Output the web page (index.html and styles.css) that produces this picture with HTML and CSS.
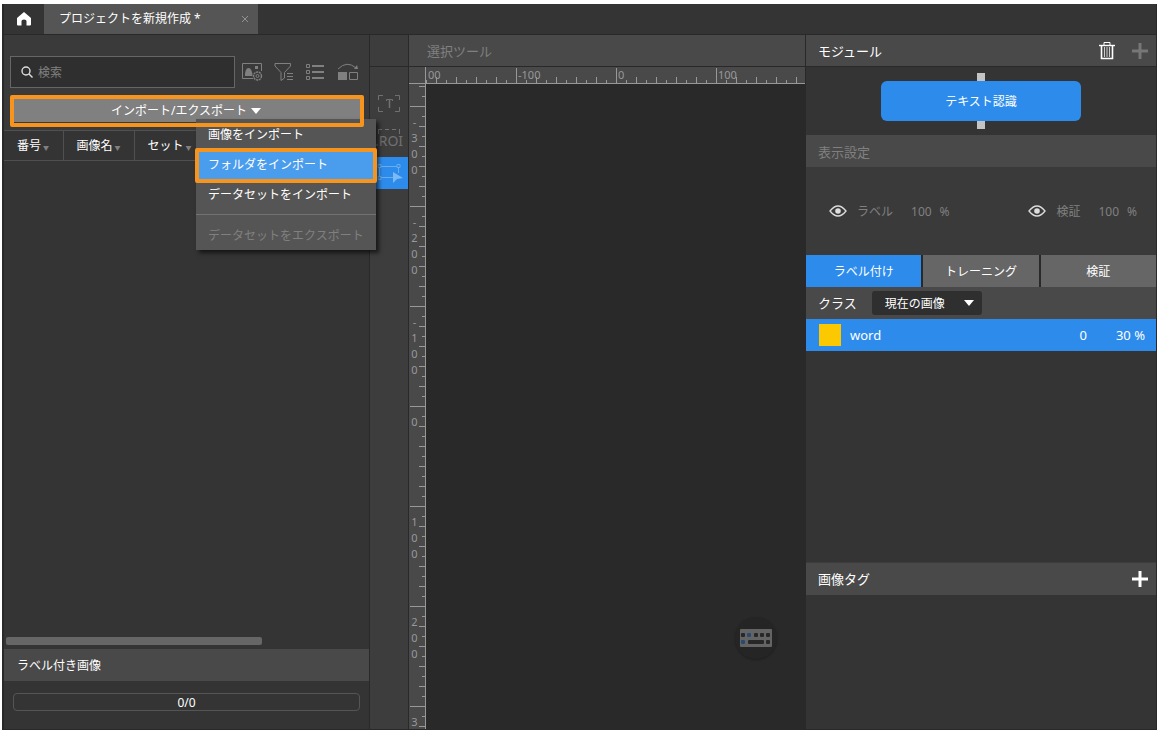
FILE: index.html
```html
<!DOCTYPE html>
<html lang="ja">
<head>
<meta charset="utf-8">
<title>プロジェクトを新規作成</title>
<link rel="stylesheet" href="styles.css">
</head>
<body>
<div class="window">
  <header class="titlebar">
    <button class="home" aria-label="ホーム">
      <svg width="16" height="16" viewBox="0 0 16 16"><path d="M8 1 L15 7 V13.5 Q15 14.500 14 14.500 H10.500 V10 Q10.500 8.500 8 8.500 Q5.500 8.500 5.500 10 V14.500 H2 Q1 14.500 1 13.500 V7 Z" fill="#fff"/></svg>
    </button>
    <div class="tab"><span>プロジェクトを新規作成 *</span><button class="close" aria-label="閉じる"><svg width="8" height="8" viewBox="0 0 8 8"><path d="M1 1 L7 7 M7 1 L1 7" stroke="#929292"/></svg></button></div>
  </header>

  <main class="workspace">
    <section class="images">
      <div class="filters">
        <label class="search">
          <svg width="13" height="13" viewBox="0 0 13 13" fill="none" stroke="#ddd" stroke-width="1.4"><circle cx="5" cy="5" r="4"/><path d="M8 8 L11.500 11.500"/></svg>
          <input type="text" placeholder="検索" aria-label="検索">
        </label>
        <div class="filter-icons">
          <button aria-label="画像表示設定"><svg width="22" height="20" viewBox="0 0 22 20" fill="none" stroke="#808080"><path d="M12 16.500 H1.500 V1.500 H20.500 V9"/><path d="M4 14 Q4 6 7.500 6 Q11 6 11.500 14 Z" fill="#808080" stroke="none"/><rect x="14" y="4" width="3" height="3" fill="#808080" stroke="none"/><circle cx="16.500" cy="14" r="4" stroke-width="1.400" stroke-dasharray="2.200 .6"/><circle cx="16.500" cy="14" r="1.500"/></svg></button>
          <button aria-label="フィルター"><svg width="22" height="20" viewBox="0 0 22 20" fill="none" stroke="#808080"><path d="M2 1.500 H17.500 V4 L11.500 10.500 V16 L8 18.500 V10.500 L2 4 Z"/><path d="M14 11.500 H20 M14 14.500 H20 M14 17.500 H20"/></svg></button>
          <button aria-label="一覧"><svg width="22" height="20" viewBox="0 0 22 20" fill="none" stroke="#808080"><path d="M1.500 2.500 h3 v3 h-3 z M1.500 8.500 h3 v3 h-3 z M1.500 14.500 h3 v3 h-3 z"/><path d="M7 4 H19 M7 10 H19 M7 16 H19" stroke-width="2"/></svg></button>
          <button aria-label="切り替え"><svg width="22" height="20" viewBox="0 0 22 20" fill="none" stroke="#808080"><path d="M1 7 Q10 -2 19 6"/><path d="M17 7 L21 7 L20 3 Z M1 10 h9 v8 h-9 z" fill="#808080" stroke="none"/><path d="M12.500 10.500 h8 v7 h-8 z"/></svg></button>
        </div>
      </div>

      <div class="import">
        <button class="import-button">インポート/エクスポート<svg width="10" height="6" viewBox="0 0 10 6"><path d="M0 0 H10 L5 6 Z" fill="#fff"/></svg></button>
        <div class="menu" role="menu">
          <button role="menuitem">画像をインポート</button>
          <button role="menuitem" class="active">フォルダをインポート</button>
          <button role="menuitem">データセットをインポート</button>
          <hr>
          <button role="menuitem" disabled>データセットをエクスポート</button>
        </div>
      </div>

      <div class="list">
        <table>
          <thead><tr>
            <th class="col-no">番号<span class="sort">▼</span></th>
            <th class="col-name">画像名<span class="sort">▼</span></th>
            <th>セット<span class="sort">▼</span></th>
          </tr></thead>
        </table>
        <div class="scrollbar"></div>
      </div>
      <h2 class="band labelled">ラベル付き画像</h2>
      <div class="progress-area"><div class="progress" role="progressbar" aria-label="ラベル付き画像" aria-valuenow="0">0/0</div></div>
    </section>

    <nav class="tools">
      <div class="tools-head"></div>
      <button aria-label="テキスト"><svg width="24" height="20" viewBox="0 0 24 20" fill="none" stroke="#707070"><path d="M1.500 6 V1.500 H6 M18 1.500 H22.500 V6 M22.500 13 V17.500 H18 M6 17.500 H1.500 V13"/><path d="M9.500 7 V5.500 H15.500 V7" /><path d="M12.500 5.500 V14" stroke-width="1.600"/></svg></button>
      <button class="roi"><svg width="24" height="7" viewBox="0 0 24 7"><path d="M1 1.500 H23 M1.500 2 V7 M22.500 2 V7" fill="none" stroke="#707070" stroke-dasharray="4 3"/></svg><span>.ROI</span></button>
      <button class="selected" aria-label="選択"><svg width="28" height="24" viewBox="0 0 28 24" fill="none" stroke="#67adef"><path d="M6 5.500 H22 M4.500 7 V15 M23.500 7 V12 M6 16.500 H18"/><path d="M3 3.500 h3 v3 h-3 z M22 3.500 h3 v3 h-3 z M3 15.500 h3 v3 h-3 z"/><path d="M18 11 L28 17 L22 18 L18 22 Z" fill="#7bbaf5" stroke="none"/></svg></button>
    </nav>

    <section class="editor">
      <h2 class="band dim">選択ツール</h2>
      <div class="stage">
        <div class="corner"></div>
        <div class="ruler-x">
          <svg width="100%" height="17"><defs><pattern id="px" x="-10" width="100" height="17" patternUnits="userSpaceOnUse"><path d="M.5 1 V17 M20.500 10 V17 M40.500 10 V17 M60.500 10 V17 M80.500 10 V17 M10.500 13 V17 M30.500 13 V17 M50.500 13 V17 M70.500 13 V17 M90.500 13 V17" stroke="#989898"/></pattern></defs><rect width="100%" height="17" fill="url(#px)"/></svg>
          <ol><li>00</li><li>-100</li><li>0</li><li>100</li></ol>
        </div>
        <div class="ruler-y">
          <svg width="17" height="100%"><defs><pattern id="py" y="22" width="17" height="100" patternUnits="userSpaceOnUse"><path d="M1 .5 H17 M10 20.500 H17 M10 40.500 H17 M10 60.500 H17 M10 80.500 H17 M13 10.500 H17 M13 30.500 H17 M13 50.500 H17 M13 70.500 H17 M13 90.500 H17" stroke="#989898"/></pattern></defs><rect width="17" height="100%" fill="url(#py)"/></svg>
          <ol><li>-<br>3<br>0<br>0</li><li>-<br>2<br>0<br>0</li><li>-<br>1<br>0<br>0</li><li>0</li><li>1<br>0<br>0</li><li>2<br>0<br>0</li><li>3</li></ol>
        </div>
        <div class="canvas">
          <button class="keyboard" aria-label="キーボード"><svg width="32" height="18" viewBox="0 0 32 18"><rect width="32" height="18" rx="1" fill="#646464"/><g fill="#272727"><rect x="1" y="4" width="4" height="4" rx="1"/><rect x="14" y="4" width="4" height="4" rx="1"/><rect x="20" y="4" width="4" height="4" rx="1"/><rect x="26" y="4" width="4" height="4" rx="1"/><rect x="8" y="11" width="16" height="4" rx="1"/><rect x="26" y="11" width="4" height="4" rx="1"/></g><g fill="#294a70"><rect x="7" y="4" width="4" height="4" rx="1"/><rect x="1" y="11" width="4" height="4" rx="1"/></g></svg></button>
        </div>
      </div>
    </section>

    <aside class="side">
      <div class="band module-head">
        <h2>モジュール</h2>
        <button aria-label="削除"><svg width="18" height="18" viewBox="0 0 18 18" fill="none" stroke="#fff"><path d="M1 3.500 H17" stroke-width="1.400"/><path d="M6 3 V.5 H12 V3" /><path d="M3.500 4 V16.500 H14.500 V4" stroke-width="1.600"/><path d="M6.500 5 V15 M9 5 V15 M11.500 5 V15" stroke="#ccc"/></svg></button>
        <button aria-label="追加" disabled><svg width="16" height="16" viewBox="0 0 16 16"><path d="M8 0 V16 M0 8 H16" stroke="#777" stroke-width="3"/></svg></button>
      </div>
      <div class="flow"><i class="port"></i><button class="node">テキスト認識</button><i class="port"></i></div>
      <h2 class="band dim">表示設定</h2>
      <div class="display">
        <div class="opacity"><svg width="18" height="12" viewBox="0 0 18 12"><path d="M1 6 Q9 -4 17 6 Q9 16 1 6 Z" fill="none" stroke="#ddd" stroke-width="1.300"/><circle cx="9" cy="6" r="2.800" fill="#ddd"/></svg><span class="name">ラベル</span><span>100</span><span class="unit">%</span></div>
        <div class="opacity"><svg width="18" height="12" viewBox="0 0 18 12"><path d="M1 6 Q9 -4 17 6 Q9 16 1 6 Z" fill="none" stroke="#ddd" stroke-width="1.300"/><circle cx="9" cy="6" r="2.800" fill="#ddd"/></svg><span class="name">検証</span><span>100</span><span class="unit">%</span></div>
      </div>
      <div class="modes"><button class="on">ラベル付け</button><button>トレーニング</button><button>検証</button></div>
      <div class="band class-head">
        <label for="scope">クラス</label>
        <span class="picker"><select id="scope"><option>現在の画像</option></select><svg width="10" height="6" viewBox="0 0 10 6"><path d="M0 0 H10 L5 6 Z" fill="#fff"/></svg></span>
      </div>
      <div class="class-row"><i class="swatch"></i><span class="word">word</span><span>0</span><span class="percent">30 %</span></div>
      <div class="class-space"></div>
      <div class="band tag-head"><h2>画像タグ</h2><button aria-label="タグを追加"><svg width="16" height="16" viewBox="0 0 16 16"><path d="M8 0 V16 M0 8 H16" stroke="#fff" stroke-width="3"/></svg></button></div>
      <div class="tag-space"></div>
    </aside>
  </main>
</div>
</body>
</html>
```
FILE: styles.css
```css
* { box-sizing: border-box; }

body {
  margin: 0;
  padding: 4px 0 0 2px;
  height: 100vh;
  background: #fff;
  color: #fff;
  font: 12px/16px "Noto Sans", "Noto Sans CJK JP", sans-serif;
}

button, input, select {
  margin: 0;
  padding: 0;
  border: 0;
  background: none;
  color: inherit;
  font: inherit;
}

svg { display: block; flex: none; }
h2 { margin: 0; font-size: 13px; font-weight: 400; }
ol { list-style: none; margin: 0; padding: 0; }

.window {
  display: flex;
  flex-direction: column;
  height: 100%;
  background: #292929;
  border: solid #292929;
  border-width: 0 1px 1px 2px;
}

.titlebar {
  display: flex;
  height: 31px;
  flex: none;
  background: #343434;
  border-bottom: 1px solid #292929;
}
.home { width: 40px; display: grid; place-items: center; }
.tab {
  display: flex;
  align-items: center;
  justify-content: space-between;
  width: 214px;
  padding: 0 9px 0 15px;
  background: #555;
}

.workspace {
  flex: 1;
  min-height: 0;
  display: grid;
  grid-template-columns: 365px 38px minmax(0, 1fr) 350px;
  grid-template-rows: minmax(0, 1fr);
  column-gap: 1px;
}
.band {
  display: flex;
  align-items: center;
  height: 32px;
  flex: none;
  padding: 0 12px;
  background: #494949;
}
.dim { color: #808080; }

/* image list */
.images {
  display: flex;
  flex-direction: column;
  min-height: 0;
  background: #3a3a3a;
}
.filters { display: flex; gap: 6px; padding: 21px 0 9px 6px; }
.search {
  display: flex;
  align-items: center;
  gap: 4px;
  width: 225px;
  height: 32px;
  padding-left: 10px;
  background: #2f2f2f;
  border: 1px solid #666;
}
.search input { width: 160px; padding-top: 2px; outline: 0; }
.search input::placeholder { color: #808080; opacity: 1; }
.filter-icons { display: flex; align-items: center; gap: 10px; }

.import { position: relative; padding: 0 7px 8px 8px; }
.import::after {
  content: "";
  position: absolute;
  inset: -2px 5px 3px 6px;
  border: 4px solid #f7941d;
  border-radius: 2px;
  z-index: 3;
  pointer-events: none;
}
.import-button {
  display: flex;
  align-items: center;
  justify-content: center;
  gap: 4px;
  width: 100%;
  height: 25px;
  padding: 2px 2px 0 0;
  background: #808080;
}
.menu {
  position: absolute;
  z-index: 2;
  left: 192px;
  top: 22px;
  width: 180px;
  background: #555;
  box-shadow: 3px 3px 4px #0009;
}
.menu button {
  display: block;
  position: relative;
  width: 100%;
  height: 30px;
  padding: 2px 0 0 12px;
  text-align: left;
}
.menu button:disabled { color: #808080; }
.menu .active { background: #4a9cec; }
.menu .active::after {
  content: "";
  position: absolute;
  inset: -1px -1px -4px;
  border: 4px solid #f7941d;
  border-radius: 2px;
}
.menu hr { margin: 5px 0; border: 0; border-top: 1px solid #727272; }

.list {
  flex: 1;
  display: flex;
  flex-direction: column;
  justify-content: space-between;
  background: #343434;
}
.list table { width: 100%; border-collapse: collapse; }
.list th {
  height: 30px;
  padding: 2px 0 0 13px;
  font-weight: 400;
  text-align: left;
  border: solid #505050;
  border-width: 1px 0;
}
.list th + th { border-left-width: 1px; }
.col-no { width: 59px; }
.col-name { width: 71px; }
.sort { font-size: 6px; color: #808080; margin-left: 2px; }
.scrollbar {
  width: 256px;
  height: 8px;
  margin: 0 2px 4px;
  border-radius: 2px;
  background: #666;
}
.labelled { font-size: 12px; padding: 2px 13px 0; }
.progress-area { height: 48px; padding: 12px 9px; background: #343434; }
.progress {
  height: 18px;
  border: 1px solid #555;
  border-radius: 4px;
  line-height: 18px;
  text-align: center;
}

/* tool strip */
.tools {
  display: flex;
  flex-direction: column;
  background: #3d3d3d;
}
.tools-head { height: 32px; margin-bottom: 20px; border-bottom: 1px solid #292929; }
.tools button {
  display: grid;
  place-items: center;
  height: 34px;
}
.tools .roi {
  align-content: start;
  height: 36px;
  padding-top: 7px;
  color: #707070;
  font-size: 14px;
}
.tools .roi span { line-height: 12px; }
.tools .selected { height: 32px; background: #2d8ceb; }

/* drawing area */
.editor { display: flex; flex-direction: column; min-height: 0; }
.editor .band { height: 31px; margin-bottom: 1px; padding: 0 18px; }
.stage {
  flex: 1;
  min-height: 0;
  display: grid;
  grid-template: 17px minmax(0, 1fr) / 17px minmax(0, 1fr);
  color: #989898;
  font-size: 11px;
}
.stage > div { overflow: hidden; }
.corner { background: #494949; border-right: 1px solid #989898; border-bottom: 1px solid #989898; }
.ruler-x, .ruler-y { display: grid; background: #494949; }
.ruler-x > *, .ruler-y > * { grid-area: 1 / 1; }
.ruler-x { border-bottom: 1px solid #989898; }
.ruler-y { border-right: 1px solid #989898; }
.ruler-x ol { display: flex; }
.ruler-x li { flex: none; width: 100px; padding-left: 2px; }
.ruler-x li:first-child { width: 90px; }
.ruler-y ol { padding-top: 22px; }
.ruler-y li { height: 100px; padding: 8px 6px 0 0; text-align: center; }
.ruler-y li:last-child { height: 24px; }
.canvas {
  display: flex;
  align-items: flex-end;
  justify-content: flex-end;
  padding: 0 28px 70px;
  background: #292929;
}
.keyboard {
  display: grid;
  place-items: center;
  width: 42px;
  height: 42px;
  border-radius: 50%;
  background: #252525;
  box-shadow: 0 1px 2px #1f1f1f;
}

/* right column */
.side {
  display: flex;
  flex-direction: column;
  min-height: 0;
  background: #343434;
}
.side .band h2 { flex: 1; }
.module-head { gap: 16px; padding-right: 8px; border-bottom: 1px solid #292929; }
.flow { display: flex; flex-direction: column; align-items: center; padding: 6px; }
.port { width: 8px; height: 8px; background: #c4c4c4; }
.node { width: 200px; height: 40px; padding-top: 2px; border-radius: 6px; background: #2d8ceb; }
.side > .dim { padding-top: 2px; }
.display {
  display: flex;
  justify-content: space-between;
  align-items: center;
  height: 88px;
  padding: 0 19px 0 23px;
  background: #3a3a3a;
  color: #808080;
}
.opacity { display: flex; align-items: center; }
.opacity span { padding-top: 2px; }
.opacity .name { margin: 0 18px 0 10px; }
.unit { margin-left: 8px; }
.modes { display: grid; grid-template-columns: repeat(3, 1fr); gap: 2px; background: #292929; }
.modes button { height: 32px; padding-top: 2px; background: #666; }
.modes .on { background: #2d8ceb; }
.class-head { gap: 15px; font-size: 13px; }
.picker {
  display: flex;
  align-items: center;
  width: 110px;
  height: 24px;
  padding: 0 8px 0 13px;
  border-radius: 3px;
  background: #2f2f2f;
  font-size: 12px;
}
.picker select { flex: 1; min-width: 0; padding-top: 2px; appearance: none; outline: 0; }
.picker option { background: #2f2f2f; }
.class-row {
  display: flex;
  align-items: center;
  height: 32px;
  padding: 0 11px 0 13px;
  background: #2d8ceb;
  font-size: 13px;
}
.swatch { width: 22px; height: 22px; margin-right: 9px; background: #fcc800; }
.word { flex: 1; }
.percent { width: 58px; text-align: right; }
.class-space { flex: 211; }
.tag-head { height: 33px; padding-right: 8px; border-top: 1px solid #3d3d3d; }
.tag-space { flex: 134; }
```
